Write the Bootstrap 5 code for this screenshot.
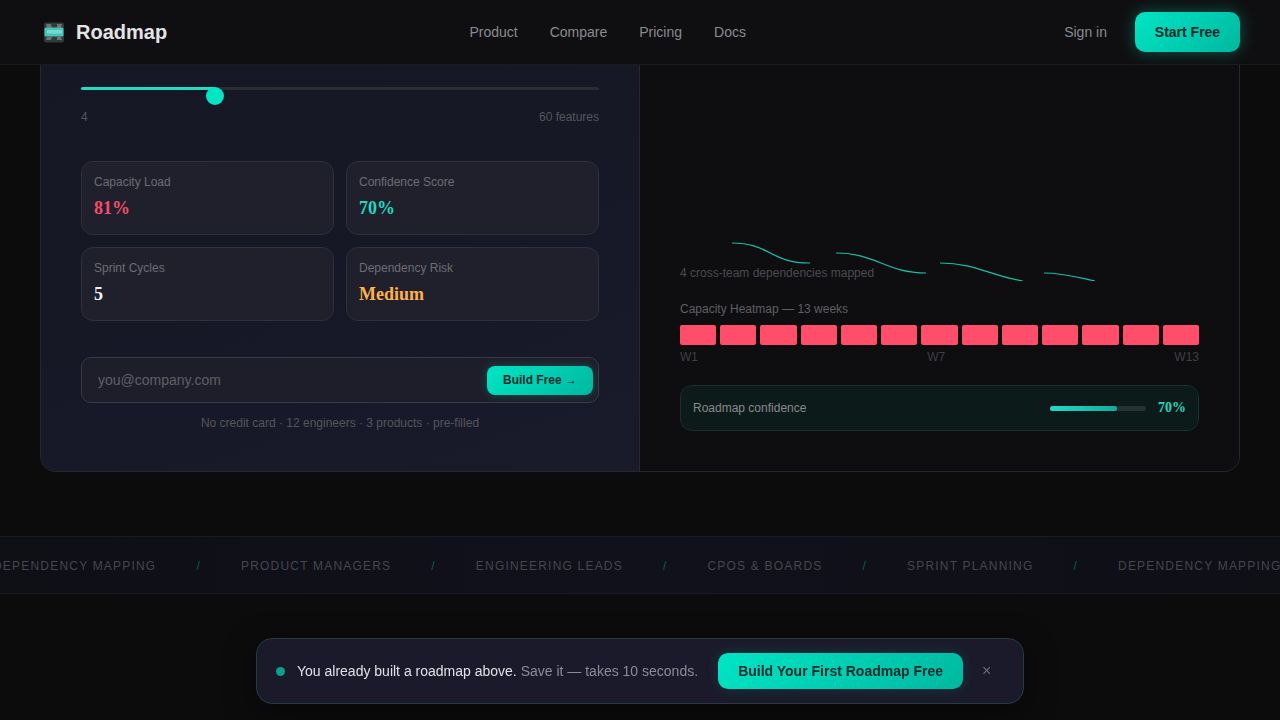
<!DOCTYPE html>
<html lang="en"><head><meta charset="utf-8"><title>Roadmap</title>
<link rel="stylesheet" href="https://cdn.jsdelivr.net/npm/bootstrap@5.3.0/dist/css/bootstrap.min.css">
<style>
html,body{height:720px;overflow:hidden}
body{background:#0c0c0d;font-family:"Liberation Sans",Arial,sans-serif;color:#e8e8ea}
.topbar{height:65px;background:#0f0f11;border-bottom:1px solid #1b1b1e;padding:0 40px}
.brand{font-size:20px;font-weight:700;color:#e4e4e6;gap:11px}
.toplink{font-size:14px;color:#8a8a8f;text-decoration:none}
.toplinks{gap:32px;margin-left:-16px}
.startbtn{width:105px;height:40px;font-size:14px;font-weight:700;color:#0a2a2a;border:0;border-radius:10px;background:linear-gradient(135deg,#00e5c4,#00b8a0);box-shadow:0 0 16px rgba(0,229,196,.35)}
.rightnav{gap:28px}
.builder{width:1200px;height:407px;margin:0 40px;border:1px solid #27272b;border-top:0;border-radius:0 0 16px 16px;overflow:hidden}
.leftpane{flex:0 0 599px;padding:16px 40px 0;background:linear-gradient(160deg,#151724,#191a2a);border-right:1px solid #27272f}
.rightpane{flex:0 0 599px;padding:0 40px;background:#0e0e10}
.track{height:3px;background:#2c2c34;border-radius:2px;margin-top:6px}
.trackfill{width:134px;height:3px;background:#1fdcc4;border-radius:2px}
.knob{width:18px;height:18px;border-radius:50%;background:#00e5c4;top:0;left:125px}
.sliderbox{height:17px}
.scale{font-size:12px;color:#55555d;margin-top:6px;line-height:14px}
.statgrid{display:grid;grid-template-columns:253px 253px;gap:12px;margin-top:37px}
.statcell{height:74px;background:#20202c;border:1px solid #30303a;border-radius:12px;padding:12px}
.statname{font-size:12px;color:#6c6c75;line-height:16px}
.statval{font-family:"Liberation Serif",serif;font-weight:700;font-size:18px;line-height:24px;margin-top:6px}
.c-red{color:#f54d6c}.c-teal{color:#1fd9c1}.c-white{color:#f0f0f2}.c-amber{color:#ffb04d}
.emailbox{height:46px;margin-top:36px;background:#1e1e2a;border:1px solid #3a3a44;border-radius:10px;padding:0 5px 0 16px}
.emailhint{font-size:14px;color:#5f5f68}
.buildbtn{width:106px;height:29px;padding:0;font-size:12px;font-weight:700;color:#0a2a2a;border:0;border-radius:8px;background:linear-gradient(135deg,#00e5c4,#00b8a0);box-shadow:0 0 10px rgba(0,229,196,.25)}
.finenote{font-size:12px;color:#55555d;margin-top:13px;line-height:14px}
.depchart{height:216px;display:block}
.depnote{font-size:12px;color:#4a4a50;line-height:14px;margin-top:-15px}
.heatlabel{font-size:12px;color:#5e5e64;line-height:14px;margin-top:22px}
.heatrow{display:grid;grid-template-columns:repeat(13,1fr);gap:4px;margin-top:9px}
.heatcell{height:20px;background:#ff4d6a;border-radius:2px}
.weeks{font-size:12px;color:#3f3f45;line-height:14px;margin-top:5px}
.confbox{height:46px;margin-top:21px;background:#0d1a1a;border:1px solid #16302c;border-radius:12px;padding:0 12px}
.conflabel{font-size:12px;color:#868b8c}
.confbar{width:96px;height:5px;background:#243230;border-radius:3px}
.conffill{width:67px;height:5px;border-radius:3px;background:linear-gradient(90deg,#1fdcc8,#14ac9c)}
.confval{font-family:"Liberation Serif",serif;font-weight:700;font-size:14px;color:#1fd9c1;margin-left:12px;margin-bottom:2px}
.ticker{height:58px;margin-top:64px;background:linear-gradient(90deg,#0f0f16,#11111c 50%,#0f0f16);border-top:1px solid #1b1b22;border-bottom:1px solid #1b1b22;overflow:hidden;padding-top:1px}
.tickertrack{margin-left:-7px;gap:40px;white-space:nowrap;font-size:12px;letter-spacing:1.2px;color:#46464f}
.slash{color:#0f5a52}
.savebar{width:768px;height:66px;left:256px;bottom:16px;background:#1a1a2a;border:1px solid #263a42;border-radius:16px;padding:0 19px;box-shadow:0 8px 30px rgba(0,0,0,.5)}
.dot{width:9px;height:9px;border-radius:50%;background:#0c9f89}
.savemsg{font-size:14px;color:#8c8c96;margin-left:12px}
.savemsg b{font-weight:400;color:#e0e0e6}
.savebtn{width:245px;height:36px;padding:0;margin-left:20px;font-size:14px;font-weight:700;color:#0a2a2a;border:0;border-radius:10px;background:linear-gradient(135deg,#00e5c4,#00b8a0);box-shadow:0 0 14px rgba(0,229,196,.15)}
.closex{font-size:16px;color:#6b6b75;margin-left:19px;line-height:1}
</style></head><body>
<nav class="topbar d-flex align-items-center justify-content-between">
  <div class="brand d-flex align-items-center">
    <svg width="25" height="25" viewBox="0 0 25 25"><defs><filter id="soft"><feGaussianBlur stdDeviation=".7"/></filter></defs><g filter="url(#soft)"><rect x="4" y="2.5" width="20" height="20" rx="2" fill="#33383a"/><path d="M6 4h5l1 4H7zM17 4h5l-1 4h-4zM7 17h5l-1 3H6zM17 17h4l1 3h-5z" fill="#6b7372"/><rect x="4.5" y="7.500" width="19" height="9" rx="1.500" fill="#47c4b5"/><rect x="7" y="10" width="15" height="3.500" fill="#6fdcd0"/></g></svg>
    <span>Roadmap</span>
  </div>
  <div class="toplinks d-flex">
    <a class="toplink" href="#">Product</a><a class="toplink" href="#">Compare</a><a class="toplink" href="#">Pricing</a><a class="toplink" href="#">Docs</a>
  </div>
  <div class="rightnav d-flex align-items-center">
    <a class="toplink" href="#">Sign in</a>
    <button class="btn startbtn">Start Free</button>
  </div>
</nav>
<section class="builder d-flex">
  <div class="leftpane">
    <div class="sliderbox position-relative">
      <div class="track"><div class="trackfill"></div></div>
      <div class="knob position-absolute"></div>
    </div>
    <div class="scale d-flex justify-content-between"><span>4</span><span>60 features</span></div>
    <div class="statgrid">
      <div class="statcell"><div class="statname">Capacity Load</div><div class="statval c-red">81%</div></div>
      <div class="statcell"><div class="statname">Confidence Score</div><div class="statval c-teal">70%</div></div>
      <div class="statcell"><div class="statname">Sprint Cycles</div><div class="statval c-white">5</div></div>
      <div class="statcell"><div class="statname">Dependency Risk</div><div class="statval c-amber">Medium</div></div>
    </div>
    <div class="emailbox d-flex align-items-center justify-content-between">
      <span class="emailhint">you@company.com</span>
      <button class="btn buildbtn">Build Free →</button>
    </div>
    <div class="finenote text-center">No credit card · 12 engineers · 3 products · pre-filled</div>
  </div>
  <div class="rightpane">
    <svg class="depchart" width="519" height="216" viewBox="680 65 519 216" fill="none" stroke="#14bfa9" stroke-width="1.2">
      <path d="M732 243C770 243 770 263 810 263"/>
      <path d="M836 253C876 253 886 273 926 273"/>
      <path d="M940 263C976 263 990 276 1023 281"/>
      <path d="M1044 273C1064 273 1080 278 1095 281"/>
    </svg>
    <div class="depnote">4 cross-team dependencies mapped</div>
    <div class="heatlabel">Capacity Heatmap — 13 weeks</div>
    <div class="heatrow">
      <div class="heatcell"></div><div class="heatcell"></div><div class="heatcell"></div><div class="heatcell"></div><div class="heatcell"></div><div class="heatcell"></div><div class="heatcell"></div><div class="heatcell"></div><div class="heatcell"></div><div class="heatcell"></div><div class="heatcell"></div><div class="heatcell"></div><div class="heatcell"></div>
    </div>
    <div class="weeks d-flex justify-content-between"><span>W1</span><span>W7</span><span>W13</span></div>
    <div class="confbox d-flex align-items-center">
      <span class="conflabel flex-grow-1">Roadmap confidence</span>
      <div class="confbar"><div class="conffill"></div></div>
      <span class="confval">70%</span>
    </div>
  </div>
</section>
<div class="ticker d-flex align-items-center">
  <div class="tickertrack d-flex">
    <span>DEPENDENCY MAPPING</span><span class="slash">/</span><span>PRODUCT MANAGERS</span><span class="slash">/</span><span>ENGINEERING LEADS</span><span class="slash">/</span><span>CPOS &amp; BOARDS</span><span class="slash">/</span><span>SPRINT PLANNING</span><span class="slash">/</span><span>DEPENDENCY MAPPING</span>
  </div>
</div>
<div class="savebar position-fixed d-flex align-items-center">
  <span class="dot"></span>
  <span class="savemsg"><b>You already built a roadmap above.</b> Save it — takes 10 seconds.</span>
  <button class="btn savebtn">Build Your First Roadmap Free</button>
  <span class="closex">×</span>
</div>
</body></html>
